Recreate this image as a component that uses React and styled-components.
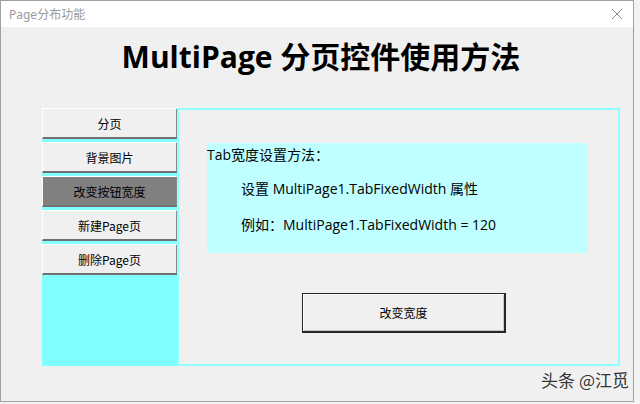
import React, { useState } from "react";
import styled, { createGlobalStyle } from "styled-components";

const GlobalStyle = createGlobalStyle`
  body {
    margin: 0;
    background: #f3f3f3;
    font-family: "Open Sans", "Noto Sans CJK SC", sans-serif;
  }
`;

const Window = styled.div`
  position: relative;
  width: 632px;
  height: 400px;
  border: 1px solid #a0a0a0;
  background: #f0f0f0;
  display: flex;
  flex-direction: column;
`;

const TitleBar = styled.div`
  height: 26px;
  background: #ffffff;
  display: flex;
  align-items: center;
  justify-content: space-between;
  padding: 0 10px 0 8px;
  font-size: 12px;
  color: #9a9a9a;
  font-family: "Noto Sans", "Noto Sans CJK SC", sans-serif;
`;

const Close = styled.svg`
  width: 12px;
  height: 12px;
`;

const Heading = styled.h1`
  margin: 0;
  padding: 11px 0 0 8px;
  height: 81px;
  box-sizing: border-box;
  text-align: center;
  font-size: 30px;
  line-height: 38px;
  font-weight: 700;
  color: #000;
  font-family: "Open Sans", "Noto Sans CJK SC", sans-serif;
`;

const MainRow = styled.div`
  display: flex;
  margin-left: 41px;
`;

const TabColumn = styled.div`
  width: 136px;
  height: 258px;
  background: #80ffff;
  display: flex;
  flex-direction: column;
  gap: 3px;
`;

const TabButton = styled.button`
  height: 31px;
  padding: 0;
  margin: 0;
  border: none;
  border-top: 1px solid #ffffff;
  border-left: 1px solid #ffffff;
  border-right: 2px solid #8a8a8a;
  border-bottom: 2px solid #707070;
  background: ${(p) => (p.$active ? "#808080" : "#f0f0f0")};
  color: #000;
  font-size: 12px;
  font-family: "Noto Sans CJK SC", sans-serif;
  cursor: pointer;
`;

const Pane = styled.div`
  width: 443px;
  height: 258px;
  box-sizing: border-box;
  margin-left: -1px;
  border: 2px solid #90ffff;
  background: #f0f0f0;
  padding: 33px 0 0 28px;
  display: flex;
  flex-direction: column;
`;

const InfoBox = styled.div`
  width: 381px;
  height: 110px;
  background: #c0ffff;
  font-size: 14px;
  color: #000;
  font-family: "Open Sans", "Noto Sans CJK SC", sans-serif;
`;

const InfoLine = styled.div`
  line-height: 24px;
  padding-left: ${(p) => (p.$indent ? "34px" : "0")};
  margin-top: ${(p) => p.$gap || 0}px;
`;

const ActionButton = styled.button`
  margin: 40px 0 0 95px;
  width: 204px;
  height: 40px;
  background: #f0f0f0;
  border: 1px solid #262626;
  border-right-width: 2px;
  border-bottom-width: 2px;
  box-shadow: inset 1px 1px 0 #ffffff, inset -1px -1px 0 #c8c8c8;
  font-size: 12px;
  color: #000;
  font-family: "Noto Sans CJK SC", sans-serif;
  cursor: pointer;
`;

const Watermark = styled.div`
  position: absolute;
  right: 4px;
  bottom: 9px;
  font-size: 17px;
  color: #333;
  text-shadow: 0 0 2px #fff;
  font-family: "Noto Sans CJK SC", sans-serif;
`;

const tabs = ["分页", "背景图片", "改变按钮宽度", "新建Page页", "删除Page页"];

export default function App() {
  const [active, setActive] = useState(2);
  return (
    <>
      <GlobalStyle />
      <Window>
        <TitleBar>
          <span>Page分布功能</span>
          <Close viewBox="0 0 12 12">
            <path d="M1 1 L11 11 M11 1 L1 11" stroke="#8a8a8a" strokeWidth="1" fill="none" />
          </Close>
        </TitleBar>
        <Heading>MultiPage 分页控件使用方法</Heading>
        <MainRow>
          <TabColumn>
            {tabs.map((t, i) => (
              <TabButton key={t} $active={i === active} onClick={() => setActive(i)}>
                {t}
              </TabButton>
            ))}
          </TabColumn>
          <Pane>
            <InfoBox>
              <InfoLine>Tab宽度设置方法：</InfoLine>
              <InfoLine $indent $gap={10}>设置 MultiPage1.TabFixedWidth 属性</InfoLine>
              <InfoLine $indent $gap={12}>例如：MultiPage1.TabFixedWidth = 120</InfoLine>
            </InfoBox>
            <ActionButton>改变宽度</ActionButton>
          </Pane>
        </MainRow>
        <Watermark>头条 @江觅</Watermark>
      </Window>
    </>
  );
}
